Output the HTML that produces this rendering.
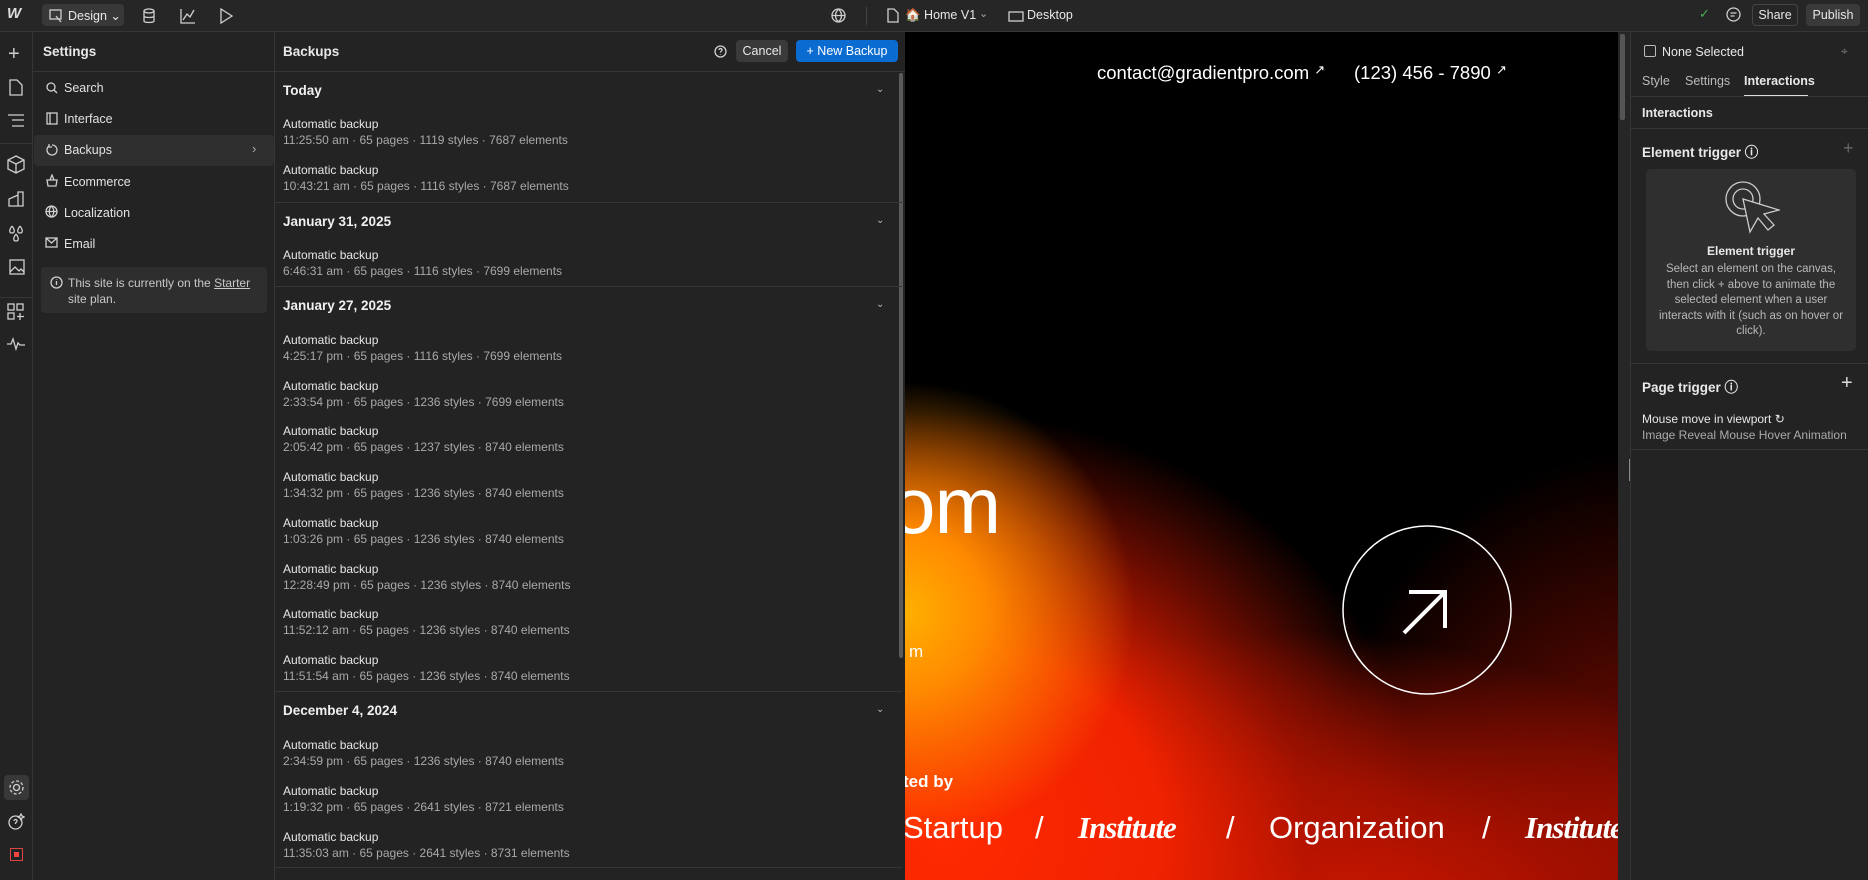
<!DOCTYPE html>
<html><head><meta charset="utf-8"><style>
*{box-sizing:border-box;margin:0;padding:0}
body{width:1868px;height:880px;overflow:hidden;background:#232323;font-family:"Liberation Sans",sans-serif;color:#e8e8e8;position:relative;font-size:12px}
.a{position:absolute}
.bd{border-color:#363636;border-style:solid;border-width:0}
svg{position:absolute;fill:none;stroke:#cfcfcf;stroke-width:1.3}
.it{position:absolute;left:283px;font-size:12px;line-height:16px}
.it b{font-weight:normal;color:#e6e6e6;display:block}
.it i{font-style:normal;color:#a9a9a9;display:block}
.sec{position:absolute;left:283px;font-size:13.5px;font-weight:bold;color:#f0f0f0}
.chev{position:absolute;left:876px;font-size:10px;color:#bbb}
.sep{position:absolute;left:275px;width:627px;height:1px;background:#363636}
.nav{position:absolute;left:64px;font-size:12.5px;color:#e2e2e2}
.sl{position:absolute;top:778px;font-size:31px;color:#fff;white-space:nowrap}
.ins{font-family:'Liberation Serif',serif;font-style:italic;font-weight:bold;letter-spacing:-1px}
</style></head><body>
<!-- top bar -->
<div class="a bd" style="left:0;top:0;width:1868px;height:32px;background:#262626;border-bottom-width:1px"></div>
<div class="a" style="left:7px;top:5px;font-weight:bold;font-size:15px;color:#ddd;font-style:italic">W</div>
<div class="a" style="left:42px;top:4px;width:82px;height:22px;background:#383838;border-radius:4px"></div>
<div class="a" style="left:68px;top:8px;font-size:12.5px">Design ⌄</div>
<svg style="left:49px;top:9px" width="14" height="14"><rect x="1" y="1" width="11" height="9"/><path d="M7 7l5 6"/></svg>
<svg style="left:142px;top:8px" width="14" height="16"><ellipse cx="7" cy="3" rx="5" ry="2"/><path d="M2 3v10c0 2 10 2 10 0V3M2 8c0 2 10 2 10 0"/></svg>
<svg style="left:180px;top:8px" width="16" height="16"><path d="M1 1v14h14M3 12l4-6 3 3 4-7"/></svg>
<svg style="left:219px;top:8px" width="14" height="16"><path d="M2 1l11 7-11 7z"/></svg>
<svg style="left:831px;top:8px" width="15" height="15"><circle cx="7.5" cy="7.5" r="6.5"/><path d="M1 7.5h13M7.5 1c-4 4-4 9 0 13M7.5 1c4 4 4 9 0 13"/></svg>
<div class="a" style="left:866px;top:7px;width:1px;height:18px;background:#444"></div>
<svg style="left:887px;top:8px" width="12" height="15"><path d="M1 1h6l4 4v9H1z"/></svg>
<div class="a" style="left:905px;top:8px;font-size:12.5px">🏠 Home V1</div>
<div class="a" style="left:979px;top:7px;font-size:11px;color:#aaa">⌄</div>
<svg style="left:1008px;top:9px" width="16" height="13"><rect x="1" y="3" width="14" height="9"/></svg>
<div class="a" style="left:1027px;top:8px;font-size:12.5px">Desktop</div>
<div class="a" style="left:1699px;top:6px;color:#4caf50;font-size:13px">✓</div>
<svg style="left:1726px;top:7px" width="15" height="15"><circle cx="7.5" cy="7.5" r="6.5"/><path d="M4.5 6h6M4.5 9h4"/></svg>
<div class="a" style="left:1752px;top:4px;width:46px;height:22px;border:1px solid #444;border-radius:4px;font-size:12.5px;text-align:center;line-height:20px">Share</div>
<div class="a" style="left:1806px;top:4px;width:54px;height:22px;background:#3a3a3a;border-radius:4px;font-size:12.5px;text-align:center;line-height:22px">Publish</div>

<!-- left rail -->
<div class="a bd" style="left:0;top:32px;width:33px;height:848px;border-right-width:1px"></div>
<div class="a" style="left:0;top:143px;width:33px;height:1px;background:#363636"></div>
<div class="a" style="left:0;top:297px;width:33px;height:1px;background:#363636"></div>
<div class="a" style="left:8px;top:43px;font-size:20px;color:#ccc;font-weight:200">+</div>
<svg style="left:9px;top:79px" width="14" height="17"><path d="M1 1h7l5 5v10H1z"/></svg>
<svg style="left:7px;top:114px" width="18" height="14"><path d="M1 1h16M5 6h12M5 12h12"/></svg>
<svg style="left:7px;top:155px" width="18" height="19"><path d="M9 1l8 4v9l-8 4-8-4V5zM1 5l8 4 8-4M9 9v9"/></svg>
<svg style="left:7px;top:190px" width="18" height="18"><path d="M11 2h5v14h-5zM11 5L2 9v7h9"/></svg>
<svg style="left:7px;top:224px" width="18" height="20"><path d="M5 2c-3 4-3 7 0 7s3-3 0-7M13 2c-3 4-3 7 0 7s3-3 0-7M9 10c-3 4-3 7 0 7s3-3 0-7"/></svg>
<svg style="left:7px;top:258px" width="18" height="18"><rect x="3" y="2" width="14" height="14"/><path d="M3 14l5-5 4 4 2-2 3 3"/></svg>
<svg style="left:7px;top:303px" width="18" height="18"><rect x="1" y="1" width="6" height="6"/><rect x="10" y="1" width="6" height="6"/><rect x="1" y="10" width="6" height="6"/><path d="M13 10v7M10 13.5h7"/></svg>
<svg style="left:6px;top:337px" width="20" height="14"><path d="M1 7h4l2-5 3 10 2-6 2 2h5"/></svg>
<div class="a" style="left:4px;top:775px;width:25px;height:25px;background:#383838;border-radius:4px"></div>
<svg style="left:8px;top:779px" width="17" height="17"><circle cx="8.5" cy="8.5" r="3"/><circle cx="8.5" cy="8.5" r="6.5" stroke-dasharray="3 2"/></svg>
<svg style="left:8px;top:813px" width="17" height="17"><circle cx="7.5" cy="9.5" r="6.5"/><path d="M6 8c0-2 3-2 3 0s-2 1-1.5 3M13 1l1 2 2 1-2 1-1 2-1-2-2-1 2-1z"/></svg>
<div class="a" style="left:10px;top:848px;width:13px;height:13px;border:1px solid #d44;background:#222"><div style="margin:3px;width:5px;height:5px;background:#e44"></div></div>

<!-- settings panel -->
<div class="a bd" style="left:33px;top:32px;width:242px;height:848px;border-right-width:1px"></div>
<div class="a" style="left:43px;top:44px;font-size:13.5px;font-weight:bold">Settings</div>
<div class="a" style="left:33px;top:71px;width:242px;height:1px;background:#363636"></div>
<div class="a" style="left:34px;top:135px;width:240px;height:31px;background:#2f2f2f;border-radius:4px"></div>
<svg style="left:46px;top:82px" width="12" height="12"><circle cx="5" cy="5" r="4"/><path d="M8 8l3 3"/></svg>
<div class="nav" style="top:81px">Search</div>
<svg style="left:46px;top:112px" width="12" height="13"><rect x="1" y="1" width="10" height="11"/><path d="M4 1v11"/></svg>
<div class="nav" style="top:112px">Interface</div>
<svg style="left:46px;top:143px" width="12" height="13"><path d="M3 3a5 5 0 1 0 3-1M3 1v3h3"/></svg>
<div class="nav" style="top:143px">Backups</div>
<div class="a" style="left:252px;top:141px;color:#aaa;font-size:13px">›</div>
<svg style="left:46px;top:174px" width="12" height="13"><path d="M1 6h10l-1 6H2zM4 6l2-5 2 5"/></svg>
<div class="nav" style="top:175px">Ecommerce</div>
<svg style="left:45px;top:205px" width="13" height="13"><circle cx="6.5" cy="6.5" r="5.5"/><path d="M1 6.5h11M6.5 1c-3 3-3 8 0 11M6.5 1c3 3 3 8 0 11"/></svg>
<div class="nav" style="top:206px">Localization</div>
<svg style="left:45px;top:237px" width="13" height="11"><rect x="1" y="1" width="11" height="9"/><path d="M1 1l5.5 5L12 1"/></svg>
<div class="nav" style="top:237px">Email</div>
<div class="a" style="left:41px;top:267px;width:226px;height:46px;background:#2e2e2e;border-radius:4px"></div>
<svg style="left:50px;top:276px" width="13" height="13"><circle cx="6.5" cy="6.5" r="5.5"/><path d="M6.5 5v4M6.5 3.5v.5"/></svg>
<div class="a" style="left:68px;top:275px;font-size:12px;line-height:16px;color:#c8c8c8;width:190px">This site is currently on the <u>Starter</u> site plan.</div>

<!-- backups panel -->
<div class="a" style="left:283px;top:44px;font-size:13.5px;font-weight:bold">Backups</div>
<svg style="left:714px;top:45px" width="13" height="13"><circle cx="6.5" cy="6.5" r="5.5"/><path d="M5 5c0-2 3-2 3 0 0 1-1.5 1-1.5 2.5M6.5 9v.5"/></svg>
<div class="a" style="left:736px;top:40px;width:52px;height:22px;background:#3a3a3a;border-radius:4px;text-align:center;line-height:22px;font-size:12.5px">Cancel</div>
<div class="a" style="left:796px;top:40px;width:102px;height:22px;background:#0a6bd1;border-radius:4px;text-align:center;line-height:22px;font-size:12.5px;color:#fff">+ New Backup</div>
<div class="a" style="left:275px;top:71px;width:630px;height:1px;background:#363636"></div>
<div class="a" style="left:899px;top:73px;width:4px;height:585px;background:#5a5a5a;border-radius:2px"></div>
<div class="sec" style="top:83px">Today</div><div class="chev" style="top:84px">⌄</div>
<div class="it" style="top:116px"><b>Automatic backup</b><i>11:25:50 am · 65 pages · 1119 styles · 7687 elements</i></div>
<div class="it" style="top:162px"><b>Automatic backup</b><i>10:43:21 am · 65 pages · 1116 styles · 7687 elements</i></div>
<div class="sep" style="top:202px"></div>
<div class="sec" style="top:214px">January 31, 2025</div><div class="chev" style="top:215px">⌄</div>
<div class="it" style="top:247px"><b>Automatic backup</b><i>6:46:31 am · 65 pages · 1116 styles · 7699 elements</i></div>
<div class="sep" style="top:286px"></div>
<div class="sec" style="top:298px">January 27, 2025</div><div class="chev" style="top:299px">⌄</div>
<div class="it" style="top:332px"><b>Automatic backup</b><i>4:25:17 pm · 65 pages · 1116 styles · 7699 elements</i></div>
<div class="it" style="top:378px"><b>Automatic backup</b><i>2:33:54 pm · 65 pages · 1236 styles · 7699 elements</i></div>
<div class="it" style="top:423px"><b>Automatic backup</b><i>2:05:42 pm · 65 pages · 1237 styles · 8740 elements</i></div>
<div class="it" style="top:469px"><b>Automatic backup</b><i>1:34:32 pm · 65 pages · 1236 styles · 8740 elements</i></div>
<div class="it" style="top:515px"><b>Automatic backup</b><i>1:03:26 pm · 65 pages · 1236 styles · 8740 elements</i></div>
<div class="it" style="top:561px"><b>Automatic backup</b><i>12:28:49 pm · 65 pages · 1236 styles · 8740 elements</i></div>
<div class="it" style="top:606px"><b>Automatic backup</b><i>11:52:12 am · 65 pages · 1236 styles · 8740 elements</i></div>
<div class="it" style="top:652px"><b>Automatic backup</b><i>11:51:54 am · 65 pages · 1236 styles · 8740 elements</i></div>
<div class="sep" style="top:691px"></div>
<div class="sec" style="top:703px">December 4, 2024</div><div class="chev" style="top:704px">⌄</div>
<div class="it" style="top:737px"><b>Automatic backup</b><i>2:34:59 pm · 65 pages · 1236 styles · 8740 elements</i></div>
<div class="it" style="top:783px"><b>Automatic backup</b><i>1:19:32 pm · 65 pages · 2641 styles · 8721 elements</i></div>
<div class="it" style="top:829px"><b>Automatic backup</b><i>11:35:03 am · 65 pages · 2641 styles · 8731 elements</i></div>
<div class="sep" style="top:867px"></div>

<!-- canvas -->
<div class="a" style="left:905px;top:32px;width:713px;height:848px;overflow:hidden;background:
radial-gradient(ellipse 230px 230px at 0px 580px,#ffb000 0%,#ff8a00 35%,rgba(255,60,0,0) 100%),
radial-gradient(ellipse 480px 420px at 40px 800px,#ff2a00 0%,#f02200 45%,rgba(180,20,0,0.6) 75%,rgba(0,0,0,0) 100%),
radial-gradient(ellipse 520px 300px at 380px 900px,#e81a00 0%,rgba(200,20,0,0.75) 50%,rgba(0,0,0,0) 100%),
radial-gradient(ellipse 320px 380px at 730px 800px,rgba(150,14,0,0.85) 0%,rgba(0,0,0,0) 100%),#000">
<div class="a" style="left:192px;top:30px;font-size:18.5px;color:#fff;white-space:nowrap">contact@gradientpro.com <span style="font-size:13px;vertical-align:top">↗</span></div>
<div class="a" style="left:449px;top:30px;font-size:18.5px;color:#fff;white-space:nowrap">(123) 456 - 7890 <span style="font-size:13px;vertical-align:top">↗</span></div>
<div class="a" style="left:-38px;top:358px;font-size:72px;color:#fff;font-weight:300">?</div>
<div class="a" style="left:-14px;top:428px;font-size:80px;color:#fff;font-weight:300;letter-spacing:-1px">om</div>
<div class="a" style="left:4px;top:610px;font-size:17px;color:#fff">m</div>
<div class="a" style="left:-2px;top:740px;font-size:17px;color:#fff;font-weight:bold">ted by</div>
<div class="sl" style="left:-2px">Startup</div>
<div class="sl" style="left:130px">/</div>
<div class="sl ins" style="left:173px">Institute</div>
<div class="sl" style="left:321px">/</div>
<div class="sl" style="left:364px">Organization</div>
<div class="sl" style="left:577px">/</div>
<div class="sl ins" style="left:620px">Institute</div>
<svg style="left:436px;top:492px;stroke:#fff;stroke-width:1.5" width="172" height="172"><circle cx="86" cy="86" r="84"/><path d="M63 109l40-40M68 68h36v36" stroke-width="4"/></svg>
</div>
<div class="a" style="left:1618px;top:32px;width:12px;height:848px;background:#262626"></div>
<div class="a" style="left:1620px;top:34px;width:5px;height:86px;background:#555;border-radius:2px"></div>
<div class="a" style="left:1629px;top:459px;width:2px;height:22px;background:#888"></div>

<!-- right panel -->
<div class="a bd" style="left:1630px;top:32px;width:238px;height:848px;border-left-width:1px"></div>
<div class="a" style="left:1644px;top:45px;width:12px;height:12px;border:1px solid #bbb;border-radius:2px"></div>
<div class="a" style="left:1662px;top:45px;font-size:12.5px">None Selected</div>
<div class="a" style="left:1841px;top:44px;color:#777;font-size:12px">⌖</div>
<div class="a" style="left:1642px;top:74px;font-size:12.5px;color:#bbb">Style</div>
<div class="a" style="left:1685px;top:74px;font-size:12.5px;color:#bbb">Settings</div>
<div class="a" style="left:1744px;top:74px;font-size:12.5px;font-weight:bold">Interactions</div>
<div class="a" style="left:1744px;top:95px;width:64px;height:2px;background:#ddd"></div>
<div class="a" style="left:1630px;top:96px;width:238px;height:1px;background:#363636"></div>
<div class="a" style="left:1642px;top:106px;font-size:12.5px;font-weight:bold">Interactions</div>
<div class="a" style="left:1630px;top:128px;width:238px;height:1px;background:#363636"></div>
<div class="a" style="left:1642px;top:141px;font-size:13.5px;font-weight:bold">Element trigger ⓘ</div>
<div class="a" style="left:1843px;top:138px;color:#666;font-size:18px">+</div>
<div class="a" style="left:1646px;top:169px;width:210px;height:182px;background:#2f2f2f;border-radius:5px"></div>
<svg style="left:1724px;top:180px;stroke:#ccc" width="56" height="56"><circle cx="19" cy="19" r="17"/><circle cx="19" cy="19" r="10"/><path d="M19 19l7 33 8-14 10 12 6-5-10-11 15-4z" fill="#2f2f2f"/></svg>
<div class="a" style="left:1646px;top:244px;width:210px;text-align:center;font-size:12px;font-weight:bold">Element trigger</div>
<div class="a" style="left:1656px;top:262px;width:190px;text-align:center;font-size:11.5px;line-height:15.6px;color:#b8b8b8">Select an element on the canvas, then click + above to animate the selected element when a user interacts with it (such as on hover or click).</div>
<div class="a" style="left:1630px;top:363px;width:238px;height:1px;background:#363636"></div>
<div class="a" style="left:1642px;top:376px;font-size:13.5px;font-weight:bold">Page trigger ⓘ</div>
<div class="a" style="left:1841px;top:372px;color:#ddd;font-size:20px;font-weight:200">+</div>
<div class="a" style="left:1642px;top:412px;font-size:12px">Mouse move in viewport ↻</div>
<div class="a" style="left:1642px;top:428px;font-size:12px;color:#aaa">Image Reveal Mouse Hover Animation</div>
<div class="a" style="left:1630px;top:449px;width:238px;height:1px;background:#363636"></div>
</body></html>
